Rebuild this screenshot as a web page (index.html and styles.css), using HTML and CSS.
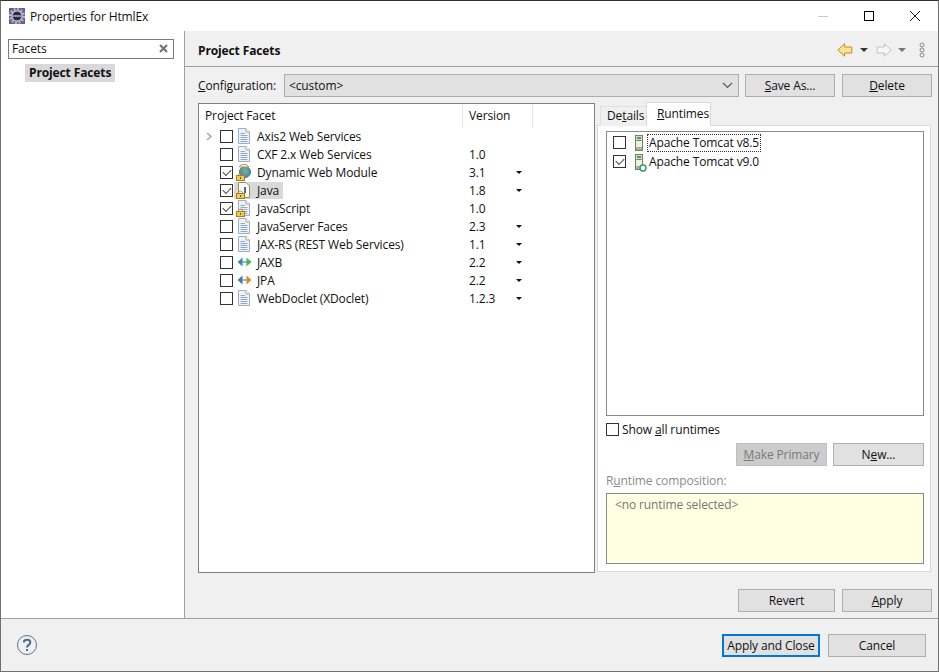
FILE: index.html
```html
<!DOCTYPE html>
<html lang="en">
<head>
<meta charset="utf-8">
<title>Properties for HtmlEx</title>
<link rel="stylesheet" href="styles.css">
</head>
<body>
<svg class="defs" width="0" height="0" aria-hidden="true">
  <symbol id="doc" viewBox="0 0 14 16">
    <path d="M1.500 .5H9L12.500 4V15.500H1.500Z" fill="#eef3fa" stroke="#9aaec6"/>
    <path d="M9 .5V4H12.500" fill="#fff" stroke="#b8a070"/>
    <path d="M3.500 5.500H8M3.500 7.500H10.500M3.500 9.500H10.500M3.500 11.500H10.500M3.500 13.500H10.500" stroke="#8fa8cc"/>
  </symbol>
  <symbol id="lock" viewBox="0 0 9 9">
    <path d="M2.500 4V2.600C2.500 .6 6.500 .6 6.500 2.600V4" fill="none" stroke="#a88a3a"/>
    <rect x=".5" y="3.500" width="8" height="5" fill="#f1c75a" stroke="#a87f20"/>
    <path d="M4.500 5V7" stroke="#7a5a10"/>
  </symbol>
  <symbol id="arrows-g" viewBox="0 0 15 10">
    <path d="M5.500 .5V9.500L.5 5Z" fill="#3f86b8"/>
    <path d="M9.500 .5V9.500L14.500 5Z" fill="#3dbb4c"/>
    <path d="M5 4.500H10V5.500H5Z" fill="#3f6f98"/>
  </symbol>
  <symbol id="arrows-o" viewBox="0 0 15 10">
    <path d="M5.500 .5V9.500L.5 5Z" fill="#3f7fb0"/>
    <path d="M9.500 .5V9.500L14.500 5Z" fill="#cf8f30"/>
    <path d="M5 4.500H10V5.500H5Z" fill="#5f6f78"/>
  </symbol>
  <symbol id="server" viewBox="0 0 10 16">
    <rect x="1.500" y=".5" width="7" height="15" fill="#d5d9c8" stroke="#767f68"/>
    <rect x="3" y="2" width="4" height="2" fill="#3fae4f"/>
    <path d="M2.500 5.500H7.500" stroke="#767f68"/>
    <rect x="2" y="6" width="6" height="6" fill="#eef0e8"/>
    <rect x="2" y="12" width="6" height="3" fill="#a9b58a"/>
  </symbol>
</svg>
<div class="window">
  <header class="titlebar">
    <svg class="appicon" viewBox="0 0 16 16" width="16" height="16">
      <rect width="16" height="16" fill="#6a5a98"/>
      <circle cx="8" cy="8" r="7" fill="none" stroke="#bdbcc8" stroke-width="2" stroke-dasharray="2 1.660"/>
      <circle cx="8" cy="8" r="5.800" fill="#d8d8de"/>
      <circle cx="8" cy="8" r="4.500" fill="#2c2a3e"/>
      <rect x="3.500" y="7" width="9" height="2" fill="#8f8fa6"/>
    </svg>
    <span class="title">Properties for HtmlEx</span>
    <div class="winbtns">
      <svg width="12" height="12" viewBox="0 0 12 12"><path d="M1 6.500H11" stroke="#c9c9c9"/></svg>
      <svg width="12" height="12" viewBox="0 0 12 12"><rect x="1.500" y="1.500" width="9" height="9" fill="none" stroke="#000"/></svg>
      <svg width="12" height="12" viewBox="0 0 12 12"><path d="M1 1 11 11M11 1 1 11" stroke="#111"/></svg>
    </div>
  </header>
  <div class="content">
    <aside class="sidebar">
      <div class="search">
        <span>Facets</span>
        <svg width="9" height="9" viewBox="0 0 9 9"><path d="M1 1 8 8M8 1 1 8" stroke="#707070" stroke-width="2"/></svg>
      </div>
      <div class="navitem">Project Facets</div>
    </aside>
    <main class="page">
      <div class="pagehead">
        <h1>Project Facets</h1>
        <div class="tools">
          <svg class="t-back" width="16" height="14" viewBox="0 0 16 14"><path d="M7.500 .8 .8 7 7.500 13.200V10H14.800V4H7.500Z" fill="#fbe39a" stroke="#c98d1e"/></svg>
          <span class="drop dark"></span>
          <svg class="t-fwd" width="16" height="14" viewBox="0 0 16 14"><path d="M8.500 .8 15.200 7 8.500 13.200V10H1.200V4H8.500Z" fill="#f7f7f7" stroke="#c2c2c2"/></svg>
          <span class="drop"></span>
          <svg class="t-more" width="6" height="16" viewBox="0 0 6 16"><circle cx="3" cy="3" r="2" fill="none" stroke="#8a8a8a"/><circle cx="3" cy="8" r="2" fill="none" stroke="#8a8a8a"/><circle cx="3" cy="13" r="2" fill="none" stroke="#8a8a8a"/></svg>
        </div>
      </div>
      <div class="pagebody">
        <div class="configrow">
          <label class="cfglabel"><u>C</u>onfiguration:</label>
          <div class="combo"><span>&lt;custom&gt;</span>
            <svg width="11" height="7" viewBox="0 0 11 7"><path d="M1 1 5.500 5.500 10 1" fill="none" stroke="#555" stroke-width="1.200"/></svg>
          </div>
          <button class="btn save"><u>S</u>ave As...</button>
          <button class="btn del"><u>D</u>elete</button>
        </div>
        <div class="panels">
          <section class="tree">
            <div class="treehead">
              <div class="th th-name">Project Facet</div>
              <div class="th th-ver">Version</div>
            </div>
            <div class="rows">
              <div class="row"><svg class="tw" width="7" height="9" viewBox="0 0 7 9"><path d="M1 1 5 4.500 1 8" fill="none" stroke="#a8a8a8" stroke-width="1.500"/></svg><span class="cb"></span><span class="ic"><svg width="14" height="16"><use href="#doc"/></svg></span><span class="nm">Axis2 Web Services</span><span class="vr"></span></div>
              <div class="row"><span></span><span class="cb"></span><span class="ic"><svg width="14" height="16"><use href="#doc"/></svg></span><span class="nm">CXF 2.x Web Services</span><span class="vr">1.0</span></div>
              <div class="row"><span></span><span class="cb on"></span><span class="ic"><svg class="glob" width="15" height="15" viewBox="0 0 15 15"><circle cx="9" cy="9" r="5.500" fill="#4f96c8" stroke="#4a7a50"/><path d="M6 6 10 5 12 9 9 12Z" fill="#7ab060"/><path d="M3.500 4C3.500 .5 12.500 .5 12.500 4Z" fill="#f2efdc" stroke="#a89a60"/></svg><svg class="lk" width="9" height="9"><use href="#lock"/></svg></span><span class="nm">Dynamic Web Module</span><span class="vr">3.1</span><span class="ar"></span></div>
              <div class="row"><span></span><span class="cb on"></span><span class="ic"><svg width="14" height="16" viewBox="0 0 14 16"><path d="M1.500 .5H9L12.500 4V15.500H1.500Z" fill="#fff" stroke="#9a8a50"/><path d="M8 5V11" stroke="#3f6fa8" stroke-width="2"/></svg><svg class="lk" width="9" height="9"><use href="#lock"/></svg></span><span class="nm"><span class="sel">Java</span></span><span class="vr">1.8</span><span class="ar"></span></div>
              <div class="row"><span></span><span class="cb on"></span><span class="ic"><svg width="14" height="16"><use href="#doc"/></svg><svg class="lk" width="9" height="9"><use href="#lock"/></svg></span><span class="nm">JavaScript</span><span class="vr">1.0</span></div>
              <div class="row"><span></span><span class="cb"></span><span class="ic"><svg width="14" height="16"><use href="#doc"/></svg></span><span class="nm">JavaServer Faces</span><span class="vr">2.3</span><span class="ar"></span></div>
              <div class="row"><span></span><span class="cb"></span><span class="ic"><svg width="14" height="16"><use href="#doc"/></svg></span><span class="nm">JAX-RS (REST Web Services)</span><span class="vr">1.1</span><span class="ar"></span></div>
              <div class="row"><span></span><span class="cb"></span><span class="ic"><svg width="15" height="10"><use href="#arrows-g"/></svg></span><span class="nm">JAXB</span><span class="vr">2.2</span><span class="ar"></span></div>
              <div class="row"><span></span><span class="cb"></span><span class="ic"><svg width="15" height="10"><use href="#arrows-o"/></svg></span><span class="nm">JPA</span><span class="vr">2.2</span><span class="ar"></span></div>
              <div class="row"><span></span><span class="cb"></span><span class="ic"><svg width="14" height="16"><use href="#doc"/></svg></span><span class="nm">WebDoclet (XDoclet)</span><span class="vr">1.2.3</span><span class="ar"></span></div>
            </div>
          </section>
          <section class="tabs">
            <div class="tabbar">
              <div class="tab">De<u>t</u>ails</div>
              <div class="tab active"><u>R</u>untimes</div>
            </div>
            <div class="tabpanel">
              <div class="rtlist">
                <div class="rt"><span class="cb"></span><svg width="10" height="16"><use href="#server"/></svg><span class="rtname focus">Apache Tomcat v8.5</span></div>
                <div class="rt"><span class="cb on"></span><span class="srv"><svg width="10" height="16"><use href="#server"/></svg><svg class="gear" width="8" height="8" viewBox="0 0 8 8"><circle cx="4" cy="4" r="3" fill="#fff" stroke="#2e9a6a" stroke-width="1.400"/></svg></span><span class="rtname">Apache Tomcat v9.0</span></div>
              </div>
              <div class="showall"><span class="cb"></span><span>Show <u>a</u>ll runtimes</span></div>
              <div class="rtbtns">
                <button class="btn off"><u>M</u>ake Primary</button>
                <button class="btn"><span>N<u>e</u>w...</span></button>
              </div>
              <div class="complabel">R<u>u</u>ntime composition:</div>
              <div class="compbox">&lt;no runtime selected&gt;</div>
            </div>
          </section>
        </div>
        <div class="pagebtns">
          <button class="btn rev">Revert</button>
          <button class="btn app"><u>A</u>pply</button>
        </div>
      </div>
    </main>
  </div>
  <footer class="footer">
    <svg class="help" width="22" height="22" viewBox="0 0 22 22">
      <circle cx="11" cy="11" r="9.500" fill="none" stroke="#5b7398" stroke-width="1"/>
      <path d="M7.800 8.500C7.800 4.800 14.300 4.800 14.300 8.500C14.300 11 11 10.800 11 13.500" fill="none" stroke="#4f6a92" stroke-width="2"/>
      <rect x="10" y="15" width="2" height="2" fill="#4f6a92"/>
    </svg>
    <div class="footbtns">
      <button class="btn primary">Apply and Close</button>
      <button class="btn cancel">Cancel</button>
    </div>
  </footer>
</div>
</body>
</html>
```
FILE: styles.css
```css
* { box-sizing: border-box; }
html, body { margin: 0; padding: 0; }
body {
  width: 939px;
  height: 672px;
  overflow: hidden;
  font-family: "Open Sans", "Noto Sans", sans-serif;
  font-size: 12px;
  letter-spacing: -0.12px;
  color: #111;
}
.defs { display: block; height: 0; }
u { text-underline-offset: 1px; }
.window {
  width: 939px;
  height: 672px;
  display: flex;
  flex-direction: column;
  background: #f0f0f0;
  border: 1px solid #707070;
  border-top-color: #303030;
}
.titlebar {
  height: 30px;
  flex: none;
  background: #fff;
  display: flex;
  align-items: center;
  padding-left: 8px;
}
.appicon { margin-right: 5px; }
.title { flex: 1; }
.winbtns { display: flex; gap: 34px; padding-right: 17px; }
.content { flex: 1; display: flex; min-height: 0; }
.sidebar {
  width: 184px;
  flex: none;
  background: #fff;
  border-right: 1px solid #a0a0a0;
  padding: 8px 0 0 7px;
}
.search {
  width: 166px;
  height: 20px;
  border: 1px solid #7a7a7a;
  display: flex;
  align-items: center;
  justify-content: space-between;
  padding: 0 5px 2px 3px;
  background: #fff;
}
.navitem {
  display: inline-block;
  margin: 5px 0 0 17px;
  padding: 0 4px;
  height: 18px;
  line-height: 18px;
  font-weight: 700;
  background: #d9d9d9;
}
.page { flex: 1; display: flex; flex-direction: column; min-width: 0; }
.pagehead {
  height: 36px;
  flex: none;
  display: flex;
  align-items: center;
  justify-content: space-between;
  padding: 3px 13px 0 13px;
  border-bottom: 1px solid #a0a0a0;
}
h1 { margin: 0; font-size: 12px; font-weight: 700; }
.tools { display: flex; align-items: center; }
.drop {
  width: 0;
  height: 0;
  border: 4px solid transparent;
  border-top: 4px solid #777;
  border-bottom: 0;
}
.drop.dark { border-top-color: #333; }
.t-back { margin-right: 7px; }
.t-fwd { margin: 0 6px 0 8px; }
.t-more { margin-left: 13px; }
.pagebody { flex: 1; display: flex; flex-direction: column; padding: 7px 6px 6px 13px; }
.configrow { display: flex; align-items: center; height: 23px; flex: none; }
.cfglabel { width: 86px; flex: none; }
.combo {
  width: 455px;
  height: 23px;
  background: #e1e1e1;
  border: 1px solid #adadad;
  display: flex;
  align-items: center;
  justify-content: space-between;
  padding: 0 5px 0 4px;
}
.btn {
  font: inherit;
  letter-spacing: inherit;
  color: #111;
  height: 23px;
  padding: 0;
  background: #e1e1e1;
  border: 1px solid #adadad;
  border-radius: 0;
}
.save { width: 90px; margin-left: 6px; }
.del { width: 90px; margin-left: 7px; }
.panels { display: flex; flex: 1; min-height: 0; margin-top: 6px; }
.tree {
  width: 397px;
  height: 470px;
  flex: none;
  background: #fff;
  border: 1px solid #7f7f7f;
}
.treehead { display: flex; height: 23px; }
.th { height: 24px; line-height: 23px; padding-left: 6px; border-right: 1px solid #e5e5e5; }
.th-name { width: 264px; }
.th-ver { width: 70px; }
.rows { display: flex; flex-direction: column; }
.row {
  height: 18px;
  display: grid;
  grid-template-columns: 15px 17px 20px 212px 48px 8px;
  align-items: center;
  padding-left: 6px;
}
.row .tw { margin-left: 1px; }
.cb {
  display: block;
  position: relative;
  width: 13px;
  height: 13px;
  border: 1px solid #333;
  background: #fff;
  flex: none;
}
.cb.on::after {
  content: "";
  position: absolute;
  left: 2px;
  top: 0;
  width: 7px;
  height: 4px;
  margin-top: 2px;
  border-left: 1.500px solid #444;
  border-bottom: 1.500px solid #444;
  transform: rotate(-45deg);
}
.ic { position: relative; display: flex; align-items: center; height: 18px; }
.lk { position: absolute; left: -1px; bottom: 0; }
.glob { margin-left: -1px; margin-top: -3px; }
.nm { white-space: nowrap; }
.sel { display: inline-block; margin-left: -23px; padding: 0 4px 0 23px; line-height: 17px; background: #d9d9d9; }
.ar {
  width: 0;
  height: 0;
  margin-left: -1px;
  border: 3px solid transparent;
  border-top: 3px solid #111;
  border-bottom: 0;
}
.tabs { flex: 1; margin-left: 2px; display: flex; flex-direction: column; height: 470px; min-width: 0; }
.tabbar { height: 23px; display: flex; align-items: flex-end; padding-left: 3px; position: relative; z-index: 1; flex: none; }
.tab { height: 20px; width: 46px; line-height: 18px; padding-left: 6px; background: #f0f0f0; border-top: 1px solid #e0e0e0; border-left: 1px solid #e0e0e0; }
.tab.active {
  width: 65px;
  height: 24px;
  padding-left: 10px;
  line-height: 21px;
  background: #fff;
  border: 1px solid #d9d9d9;
  border-bottom: 0;
}
.tabpanel {
  width: 334px;
  height: 447px;
  background: #fff;
  border: 1px solid #d9d9d9;
  padding: 5px 7px 0 8px;
  margin-top: -1px;
}
.rtlist {
  width: 318px;
  height: 285px;
  border: 1px solid #8a8a8a;
  padding-top: 1px;
}
.rt { height: 19px; display: flex; align-items: center; padding-left: 6px; }
.rt > svg, .srv { margin-left: 8px; width: 10px; flex: none; }
.srv { position: relative; display: flex; height: 16px; }
.gear { position: absolute; left: 5px; bottom: -2px; }
.rtname { margin-left: 4px; padding: 0 1px; line-height: 16px; }
.rtname.focus { outline: 1px dotted #333; }
.showall { display: flex; align-items: center; gap: 3px; margin-top: 6px; height: 14px; }
.rtbtns { display: flex; justify-content: flex-end; gap: 6px; margin-top: 7px; width: 318px; }
.rtbtns .btn { width: 91px; }
.rtbtns .off { background: #cccccc; border-color: #bfbfbf; color: #7a7a7a; }
.complabel { color: #8c8c8c; margin-top: 6px; height: 17px; line-height: 17px; }
.compbox {
  width: 318px;
  height: 71px;
  margin-top: 4px;
  background: #ffffe1;
  border: 1px solid #8a8a8a;
  padding: 2px 0 0 8px;
  color: #777;
}
.pagebtns { display: flex; justify-content: flex-end; gap: 7px; margin-top: 15px; flex: none; }
.rev { width: 97px; }
.app { width: 90px; }
.footer {
  height: 53px;
  flex: none;
  border-top: 1px solid #a0a0a0;
  display: flex;
  align-items: center;
  justify-content: space-between;
  padding: 0 12px 0 15px;
}
.footbtns { display: flex; gap: 8px; margin-top: 0; }
.primary { width: 98px; border: 2px solid #0078d7; }
.cancel { width: 98px; }
```
